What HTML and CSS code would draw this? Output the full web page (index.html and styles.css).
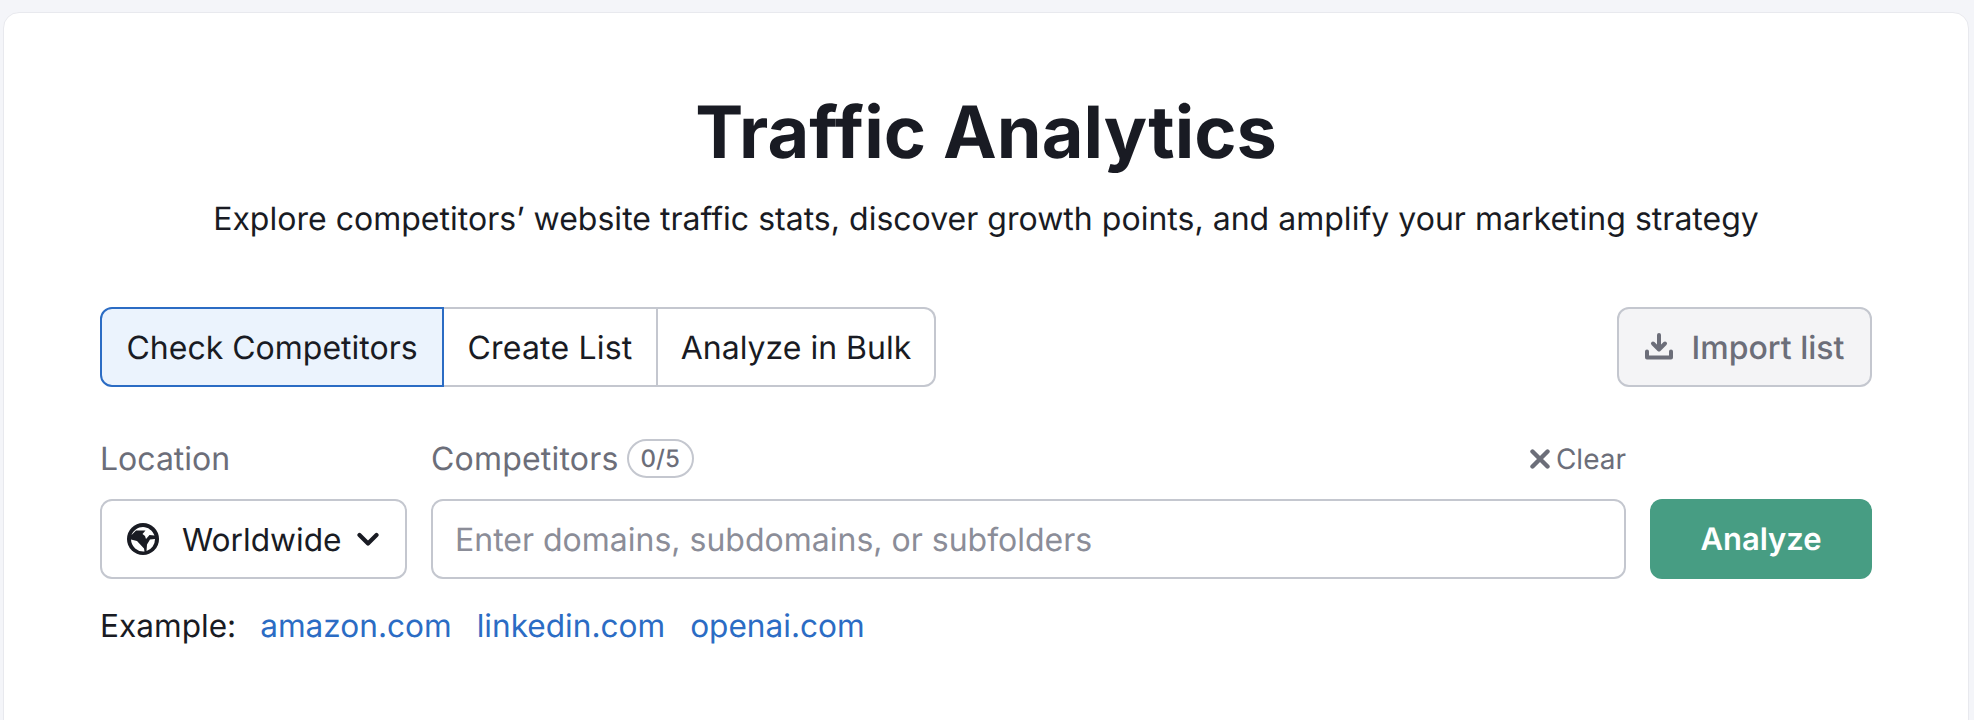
FILE: index.html
```html
<!DOCTYPE html>
<html lang="en">
<head>
<meta charset="utf-8">
<title>Traffic Analytics</title>
<link rel="stylesheet" href="styles.css">
</head>
<body>
<main class="card">
  <h1 class="title">Traffic Analytics</h1>
  <p class="subtitle">Explore competitors’ website traffic stats, discover growth points, and amplify your marketing strategy</p>
  <div class="toolbar">
    <div class="tabs">
      <button class="tab tab-active">Check Competitors</button>
      <button class="tab tab-list">Create List</button>
      <button class="tab tab-bulk">Analyze in Bulk</button>
    </div>
    <button class="import">
      <svg class="import-icon" viewBox="0 0 28 28" aria-hidden="true"><path d="M14 2v14M8 10.500l6 6 6-6M2 18.500v6h24v-6" fill="none" stroke="currentColor" stroke-width="4" stroke-linecap="round" stroke-linejoin="round"/></svg>
      Import list
    </button>
  </div>
  <div class="form">
    <div class="col-location">
      <div class="label-row"><span class="label">Location</span></div>
      <button class="select">
        <svg class="globe" viewBox="0 0 32 32" aria-hidden="true">
          <circle cx="16" cy="16" r="16" fill="#191b23"/>
          <path d="M4.500 12C6.500 7.500 11 4 16 4c5 0 9.500 3.500 11.500 8.500l-5-.5-3.500 4-1-3-2.500-2 3-3.500H9Z M4 16.500l6 1.500 7 7.500.5 3A12.500 12.500 0 0 1 4 16.500Z M28 16l-5 .5-3 5-.5 6.500A12.500 12.500 0 0 0 28 16Z" fill="#fff"/>
        </svg>
        <span class="select-text">Worldwide</span>
        <svg class="chevron" viewBox="0 0 22 14" aria-hidden="true"><path d="M2.500 3l8.500 8.500L19.500 3" fill="none" stroke="#191b23" stroke-width="4.200" stroke-linecap="round" stroke-linejoin="round"/></svg>
      </button>
    </div>
    <div class="col-input">
      <div class="label-row">
        <span class="label label-wide">Competitors</span>
        <span class="badge">0/5</span>
        <span class="clear">
          <svg class="clear-icon" viewBox="0 0 20 20" aria-hidden="true"><path d="M2.500 2.500l15 15M17.500 2.500l-15 15" fill="none" stroke="currentColor" stroke-width="4.400" stroke-linecap="round"/></svg>
          Clear
        </span>
      </div>
      <div class="input">Enter domains, subdomains, or subfolders</div>
    </div>
    <button class="analyze">Analyze</button>
  </div>
  <div class="examples">
    <span class="example-label">Example:</span>
    <a class="example-link">amazon.com</a>
    <a class="example-link">linkedin.com</a>
    <a class="example-link">openai.com</a>
  </div>
</main>
</body>
</html>
```

FILE: styles.css
```css
* { box-sizing: border-box; }
html, body { height: 100%; }
body {
  margin: 0;
  height: 720px;
  overflow: hidden;
  background: #f4f5f9;
  font-family: Inter, "Liberation Sans", sans-serif;
  color: #191b23;
  padding: 12px 5px 0 3px;
  text-rendering: geometricPrecision;
}
.card {
  height: 740px;
  background: #fff;
  border: 1px solid #e8e9ee;
  border-radius: 16px;
  padding: 0 96px;
}
.title {
  margin: 76px 0 0;
  text-align: center;
  font-size: 72px;
  line-height: 88px;
  font-weight: 700;
  font-variant-ligatures: none;
}
.subtitle {
  margin: 20px 0 0;
  text-align: center;
  font-size: 32px;
  line-height: 44px;
  letter-spacing: .02px;
}
.toolbar {
  margin-top: 66px;
  display: flex;
  justify-content: space-between;
}
.tabs { display: flex; }
button { font-family: inherit; text-rendering: inherit; }
.tab {
  width: 214px;
  height: 80px;
  padding: 0;
  border: 2px solid #c4c7cf;
  border-left-width: 0;
  background: #fff;
  color: #191b23;
  font-size: 32px;
}
.tab-list { letter-spacing: .2px; }
.tab-bulk {
  width: 278px;
  border-radius: 0 12px 12px 0;
}
.tab-active {
  width: 344px;
  border: 2px solid #2b6cc4;
  background: #ebf3fd;
  border-radius: 12px 0 0 12px;
}
.import {
  height: 80px;
  width: 255px;
  display: flex;
  align-items: center;
  justify-content: center;
  gap: 19px;
  border: 2px solid #c4c7cf;
  border-radius: 12px;
  background: #f4f4f6;
  color: #6c6e79;
  font-size: 32px;
  font-weight: 500;
}
.import-icon { width: 28px; height: 28px; }
.form {
  margin-top: 51px;
  display: flex;
  align-items: flex-end;
  gap: 24px;
}
.col-location { width: 307px; flex: none; }
.col-input { flex: 1; }
.label-row {
  height: 40px;
  margin-bottom: 21px;
  display: flex;
  align-items: center;
  gap: 8px;
}
.label { font-size: 32px; color: #6c6e79; }
.label-wide { letter-spacing: .2px; }
.badge {
  height: 39px;
  padding: 0 12px;
  display: flex;
  align-items: center;
  border: 2px solid #c4c7cf;
  border-radius: 20px;
  font-size: 24px;
  font-weight: 500;
  color: #6c6e79;
}
.clear {
  margin-left: auto;
  padding-top: 2px;
  display: flex;
  align-items: center;
  gap: 6px;
  font-size: 28px;
  color: #6c6e79;
}
.clear-icon { width: 20px; height: 20px; }
.select {
  width: 100%;
  height: 80px;
  padding: 0 26px 0 25px;
  display: flex;
  align-items: center;
  border: 2px solid #c4c7cf;
  border-radius: 12px;
  background: #fff;
  color: #191b23;
  font-size: 31.7px;
}
.globe { width: 32px; height: 32px; flex: none; }
.select-text { margin-left: 23px; }
.chevron { width: 22px; height: 14px; margin-left: auto; }
.input {
  height: 80px;
  padding: 0 22px;
  display: flex;
  align-items: center;
  border: 2px solid #c4c7cf;
  border-radius: 12px;
  font-size: 32px;
  color: #8b8d98;
}
.analyze {
  width: 222px;
  height: 80px;
  flex: none;
  border: 0;
  border-radius: 12px;
  background: #479d83;
  color: #fff;
  font-size: 31px;
  font-weight: 600;
}
.examples {
  margin-top: 27px;
  display: flex;
  align-items: center;
  gap: 25px;
  font-size: 31.6px;
  line-height: 40px;
}
.example-label { margin-right: -1px; }
.example-link { color: #2b6cc4; }
```
